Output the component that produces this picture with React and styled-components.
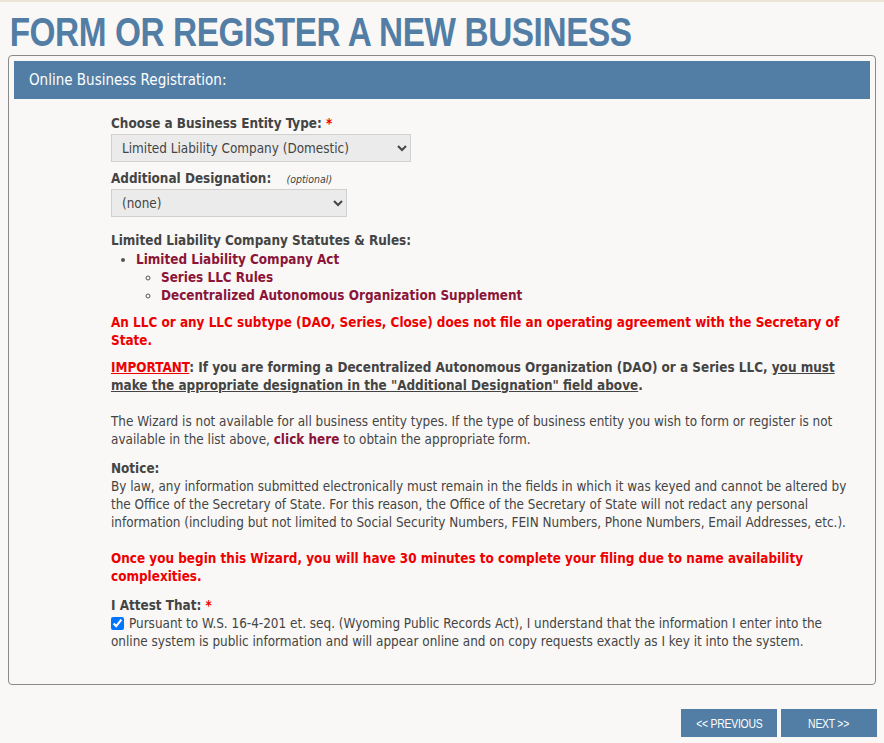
import React from "react";
import styled, { createGlobalStyle } from "styled-components";

const GlobalStyle = createGlobalStyle`
    html, body {
        margin: 0;
        padding: 0;
        background: #f9f8f6;
    }
    body {
        border-top: 2px solid #ece4d4;
        font-family: "DejaVu Sans Condensed", "DejaVu Sans", sans-serif;
        color: #444;
    }
`;

const Page = styled.div`
    padding: 0 8px 8px 8px;
`;

const Title = styled.h1`
    margin: 0;
    padding: 8px 0 0 2px;
    height: 45px;
    font-family: "Liberation Sans", Arial, sans-serif;
    font-weight: bold;
    font-size: 41px;
    line-height: 45px;
    color: #527ea6;
    letter-spacing: -0.5px;
    white-space: nowrap;
    transform: scaleX(0.813);
    transform-origin: left center;
`;

const Panel = styled.div`
    border: 1px solid #8a8a8a;
    border-radius: 4px;
    padding: 5px 5px 33px 5px;
    width: 856px;
    box-sizing: content-box;
`;

const PanelHeader = styled.div`
    background: #527ea6;
    color: #fff;
    height: 38px;
    display: flex;
    align-items: center;
    padding-left: 15px;
    font-size: 15px;
`;

const Content = styled.div`
    padding: 16px 20px 0 97px;
    font-size: 13.4px;
    line-height: 18px;
`;

const Label = styled.div`
    font-weight: bold;
    color: #444;
    margin: ${({ $mt }) => $mt || 0}px 0 1px 0;
`;

const Required = styled.span`
    color: #e00;
`;

const Optional = styled.span`
    font-weight: normal;
    font-style: italic;
    font-size: 10.5px;
    margin-left: 11px;
    color: #444;
`;

const Select = styled.select`
    display: block;
    width: ${({ $w }) => $w}px;
    height: 28px;
    background: #ebebeb;
    border: 1px solid #d0d0d0;
    border-radius: 0;
    color: #444;
    font-family: inherit;
    font-size: 13.4px;
    padding: 0 6px;
    margin-bottom: ${({ $mb }) => $mb || 0}px;
`;

const RulesList = styled.ul`
    margin: 0;
    padding-left: 25px;
    list-style: disc;

    ul {
        margin: 0;
        padding-left: 25px;
        list-style: circle;
    }
`;

const LinkItem = styled.li`
    color: #8b1538;
    font-weight: bold;

    &::marker {
        color: #555;
    }
`;

const Para = styled.p`
    margin: ${({ $mt }) => $mt || 0}px 0 0 0;
    color: ${({ $red }) => ($red ? "#ee0000" : "#444")};
    font-weight: ${({ $bold }) => ($bold ? "bold" : "normal")};
`;

const Alert = styled.u`
    color: #ee0000;
`;

const Link = styled.a`
    color: #8b1538;
    font-weight: bold;
    text-decoration: none;
`;

const Attest = styled.label`
    display: block;

    input {
        margin: 0 5px 0 0;
        width: 13px;
        height: 13px;
        vertical-align: -2px;
        accent-color: #0075ff;
    }
`;

const Buttons = styled.div`
    display: flex;
    justify-content: flex-end;
    gap: 4px;
    margin-top: 24px;
    width: 869px;
`;

const NavButton = styled.button`
    width: 96px;
    height: 28px;
    padding: 0;
    background: #527ea6;
    color: #fff;
    border: none;
    font-family: "Liberation Sans", Arial, sans-serif;
    font-size: 13px;
    cursor: pointer;
`;

const ButtonLabel = styled.span`
    display: inline-block;
    transform: scaleX(0.8);
    letter-spacing: -0.3px;
`;

export default function App() {
    return (
        <Page>
            <GlobalStyle />
            <Title>FORM OR REGISTER A NEW BUSINESS</Title>
            <Panel>
                <PanelHeader>Online Business Registration:</PanelHeader>
                <Content>
                    <Label>Choose a Business Entity Type: <Required>*</Required></Label>
                    <Select $w={300} $mb={8} defaultValue="llc">
                        <option value="llc">Limited Liability Company (Domestic)</option>
                    </Select>
                    <Label>Additional Designation: <Optional>(optional)</Optional></Label>
                    <Select $w={236} defaultValue="none">
                        <option value="none">(none)</option>
                    </Select>

                    <Label $mt={15}>Limited Liability Company Statutes &amp; Rules:</Label>
                    <RulesList>
                        <LinkItem>
                            Limited Liability Company Act
                            <ul>
                                <LinkItem>Series LLC Rules</LinkItem>
                                <LinkItem>Decentralized Autonomous Organization Supplement</LinkItem>
                            </ul>
                        </LinkItem>
                    </RulesList>

                    <Para $red $bold $mt={9}>
                        An LLC or any LLC subtype (DAO, Series, Close) does not file an operating agreement with the Secretary of State.
                    </Para>
                    <Para $bold $mt={9}>
                        <Alert>IMPORTANT</Alert>: If you are forming a Decentralized Autonomous Organization (DAO) or a Series LLC, <u>you must make the appropriate designation in the "Additional Designation" field above</u>.
                    </Para>
                    <Para $mt={18}>
                        The Wizard is not available for all business entity types. If the type of business entity you wish to form or register is not available in the list above, <Link href="#">click here</Link> to obtain the appropriate form.
                    </Para>
                    <Para $bold $mt={11}>Notice:</Para>
                    <Para>
                        By law, any information submitted electronically must remain in the fields in which it was keyed and cannot be altered by the Office of the Secretary of State. For this reason, the Office of the Secretary of State will not redact any personal information (including but not limited to Social Security Numbers, FEIN Numbers, Phone Numbers, Email Addresses, etc.).
                    </Para>
                    <Para $red $bold $mt={18}>
                        Once you begin this Wizard, you will have 30 minutes to complete your filing due to name availability complexities.
                    </Para>
                    <Para $bold $mt={11}>I Attest That: <Required>*</Required></Para>
                    <Attest>
                        <input type="checkbox" defaultChecked />
                        Pursuant to W.S. 16-4-201 et. seq. (Wyoming Public Records Act), I understand that the information I enter into the online system is public information and will appear online and on copy requests exactly as I key it into the system.
                    </Attest>
                </Content>
            </Panel>
            <Buttons>
                <NavButton><ButtonLabel>&lt;&lt; PREVIOUS</ButtonLabel></NavButton>
                <NavButton><ButtonLabel>NEXT &gt;&gt;</ButtonLabel></NavButton>
            </Buttons>
        </Page>
    );
}
